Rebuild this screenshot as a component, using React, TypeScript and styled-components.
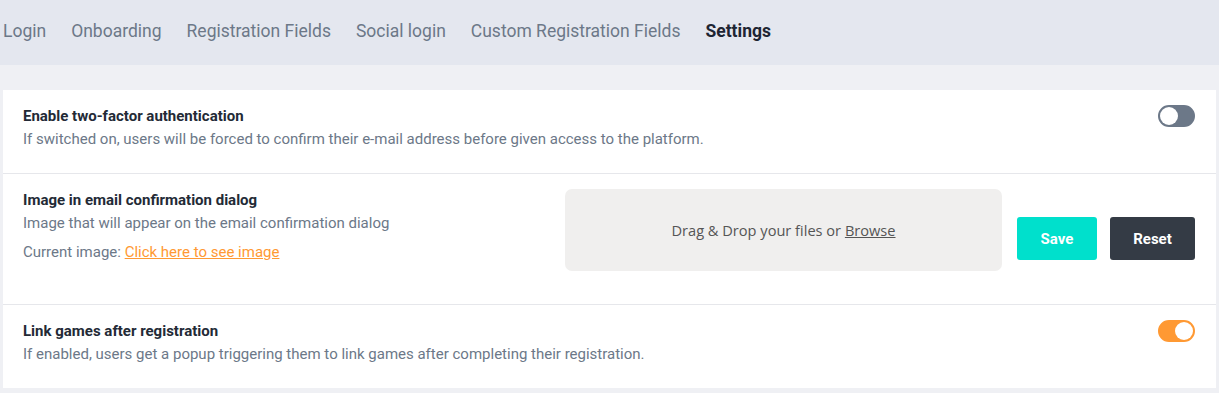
import { createGlobalStyle } from "styled-components";
import styled from "styled-components";

const GlobalStyle = createGlobalStyle`
  html, body {
    margin: 0;
    padding: 0;
    background: #eff0f4;
    font-family: Roboto, "Liberation Sans", sans-serif;
  }
`;

const Page = styled.div`
  width: 1219px;
  min-height: 393px;
  background: #eff0f4;
`;

const Tabs = styled.nav`
  height: 65px;
  background: #e4e7ef;
  display: flex;
  align-items: center;
  gap: 25px;
  padding: 0 0 3px 3px;
  box-sizing: border-box;
`;

const Tab = styled.span<{ $active?: boolean }>`
  font-size: 17.5px;
  color: ${(p) => (p.$active ? "#1e2533" : "#6c7888")};
  font-weight: ${(p) => (p.$active ? 700 : 400)};
  cursor: pointer;
`;

const Content = styled.main`
  padding: 25px 3px 5px 3px;
`;

const Card = styled.section`
  background: #fff;
`;

const Row = styled.div<{ $last?: boolean }>`
  display: flex;
  align-items: flex-start;
  justify-content: space-between;
  padding: 15px 21px 22px 20px;
  border-bottom: ${(p) => (p.$last ? "none" : "1px solid #e6e7eb")};
`;

const Info = styled.div`
  display: flex;
  flex-direction: column;
`;

const Title = styled.div`
  font-size: 15px;
  font-weight: 700;
  color: #232a36;
  line-height: 22px;
`;

const Desc = styled.div`
  font-size: 15px;
  color: #6c7888;
  line-height: 24px;
`;

const Current = styled(Desc)`
  margin-top: 5px;
`;

const Link = styled.a`
  color: #ff9933;
  text-decoration: underline;
  cursor: pointer;
`;

const Switch = styled.div<{ $on?: boolean }>`
  width: 37px;
  height: 22px;
  box-sizing: border-box;
  border-radius: 11px;
  background: ${(p) => (p.$on ? "#ff9933" : "#6c7888")};
  border: 2px solid ${(p) => (p.$on ? "#ff9933" : "#6c7888")};
  display: flex;
  justify-content: ${(p) => (p.$on ? "flex-end" : "flex-start")};
`;

const Knob = styled.div`
  width: 18px;
  height: 18px;
  border-radius: 50%;
  background: #fff;
`;

const UploadArea = styled.div`
  display: flex;
  align-items: flex-start;
  gap: 13px;
  margin-bottom: 11px;
`;

const Dropzone = styled.div`
  width: 437px;
  height: 82px;
  background: #f0efee;
  border-radius: 7px;
  display: flex;
  align-items: center;
  justify-content: center;
  font-family: "Open Sans", "Liberation Sans", sans-serif;
  font-size: 14.6px;
  color: #555;
  margin-right: 2px;
`;

const Browse = styled.span`
  text-decoration: underline;
  cursor: pointer;
`;

const Actions = styled.div`
  display: flex;
  gap: 13px;
  margin-top: 28px;
`;

const Button = styled.button<{ $variant: "save" | "reset" }>`
  height: 43px;
  width: ${(p) => (p.$variant === "save" ? "80px" : "85px")};
  border: none;
  border-radius: 3px;
  background: ${(p) => (p.$variant === "save" ? "#00e0cc" : "#343b45")};
  color: #fff;
  font-family: Roboto, "Liberation Sans", sans-serif;
  font-size: 15px;
  font-weight: 700;
  cursor: pointer;
`;

const tabs = [
  "Login",
  "Onboarding",
  "Registration Fields",
  "Social login",
  "Custom Registration Fields",
  "Settings",
];

export default function App() {
  return (
    <Page>
      <GlobalStyle />
      <Tabs>
        {tabs.map((t) => (
          <Tab key={t} $active={t === "Settings"}>
            {t}
          </Tab>
        ))}
      </Tabs>
      <Content>
        <Card>
          <Row>
            <Info>
              <Title>Enable two-factor authentication</Title>
              <Desc>
                If switched on, users will be forced to confirm their e-mail
                address before given access to the platform.
              </Desc>
            </Info>
            <Switch>
              <Knob />
            </Switch>
          </Row>
          <Row>
            <Info>
              <Title>Image in email confirmation dialog</Title>
              <Desc>Image that will appear on the email confirmation dialog</Desc>
              <Current>
                Current image: <Link>Click here to see image</Link>
              </Current>
            </Info>
            <UploadArea>
              <Dropzone>
                Drag &amp; Drop your files or&nbsp;<Browse>Browse</Browse>
              </Dropzone>
              <Actions>
                <Button $variant="save">Save</Button>
                <Button $variant="reset">Reset</Button>
              </Actions>
            </UploadArea>
          </Row>
          <Row $last>
            <Info>
              <Title>Link games after registration</Title>
              <Desc>
                If enabled, users get a popup triggering them to link games
                after completing their registration.
              </Desc>
            </Info>
            <Switch $on>
              <Knob />
            </Switch>
          </Row>
        </Card>
      </Content>
    </Page>
  );
}
